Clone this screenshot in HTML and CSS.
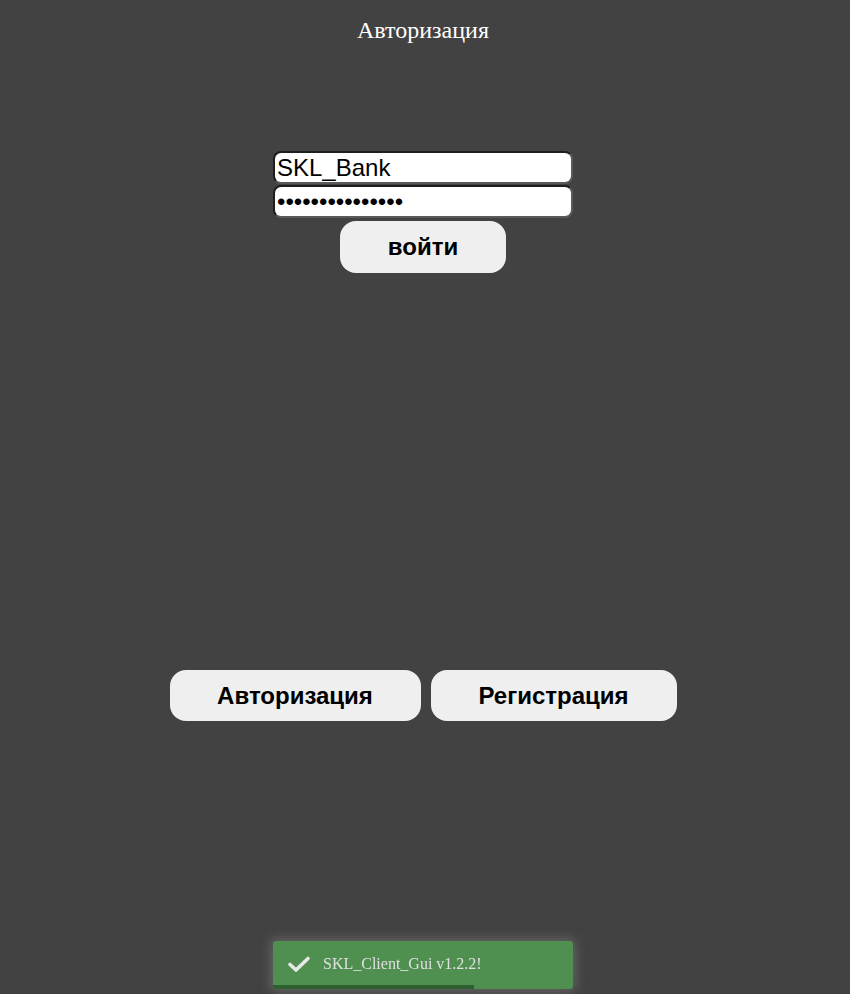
FILE: index.html
```html
<!DOCTYPE html>
<html lang="ru">
<head>
<meta charset="utf-8">
<title>Авторизация</title>
<link rel="stylesheet" href="styles.css">
</head>
<body>
<div class="page">
  <h1 class="title">Авторизация</h1>
  <form class="login">
    <input class="field" type="text" value="SKL_Bank">
    <input class="field field-pass" type="password" value="123456789012345">
    <button class="btn btn-login" type="button">войти</button>
  </form>
  <nav class="tabs">
    <button class="btn tab tab-auth" type="button">Авторизация</button>
    <button class="btn tab tab-reg" type="button">Регистрация</button>
  </nav>
</div>
<div class="toast">
  <svg class="toast-icon" viewBox="0 0 24 24" width="24" height="24"><path d="M3 12.5 L9 18 L21 6.5" fill="none" stroke="#e8e8e8" stroke-width="3.6" stroke-linecap="round" stroke-linejoin="round"/></svg>
  <span class="toast-text">SKL_Client_Gui v1.2.2!</span>
  <div class="toast-bar"></div>
</div>
</body>
</html>
```
FILE: styles.css
```css
html, body {
  margin: 0;
  padding: 0;
  background: #424242;
  height: 100%;
}
.page {
  display: flex;
  flex-direction: column;
  align-items: center;
  padding-right: 4px;
}
.title {
  margin: 0;
  padding-top: 16px;
  height: 28px;
  font-family: "Liberation Serif", serif;
  font-weight: normal;
  font-size: 24px;
  line-height: 28px;
  color: #ffffff;
  text-align: center;
}
.login {
  margin-top: 107px;
  display: flex;
  flex-direction: column;
  align-items: center;
  gap: 1px;
}
.field {
  box-sizing: border-box;
  width: 300px;
  height: 33px;
  margin: 0;
  padding: 1px 2px;
  border: 2px solid #1e1e1e;
  border-right-color: #5a5a5a;
  border-bottom-color: #5a5a5a;
  border-radius: 8px;
  background: #ffffff;
  color: #000000;
  font-family: "Liberation Sans", Arial, sans-serif;
  font-size: 24px;
  outline: none;
}
.btn {
  box-sizing: border-box;
  border: none;
  background: #efefef;
  color: #000000;
  font-family: "Liberation Sans", Arial, sans-serif;
  font-weight: bold;
  font-size: 24px;
  border-radius: 16px;
  padding: 0;
}
.btn-login {
  margin-top: 2px;
  width: 166px;
  height: 52px;
}
.tabs {
  margin-top: 397px;
  display: flex;
  gap: 10px;
}
.tab {
  height: 51px;
}
.tab-auth { width: 251px; }
.tab-reg { width: 246px; }
.toast {
  position: fixed;
  left: 273px;
  top: 941px;
  width: 300px;
  height: 48px;
  box-sizing: border-box;
  background: #4f8f4f;
  border-radius: 3px;
  box-shadow: 0 0 12px 2px rgba(120, 120, 120, 0.7);
  display: flex;
  align-items: center;
  padding-left: 14px;
  padding-bottom: 2px;
  overflow: hidden;
}
.toast-icon {
  flex: none;
  margin-right: 12px;
}
.toast-text {
  font-family: "Liberation Serif", serif;
  font-size: 16px;
  color: #e0e0e0;
}
.toast-bar {
  position: absolute;
  left: 0;
  bottom: 0;
  width: 201px;
  height: 4px;
  background: #2f5f2f;
}
```
